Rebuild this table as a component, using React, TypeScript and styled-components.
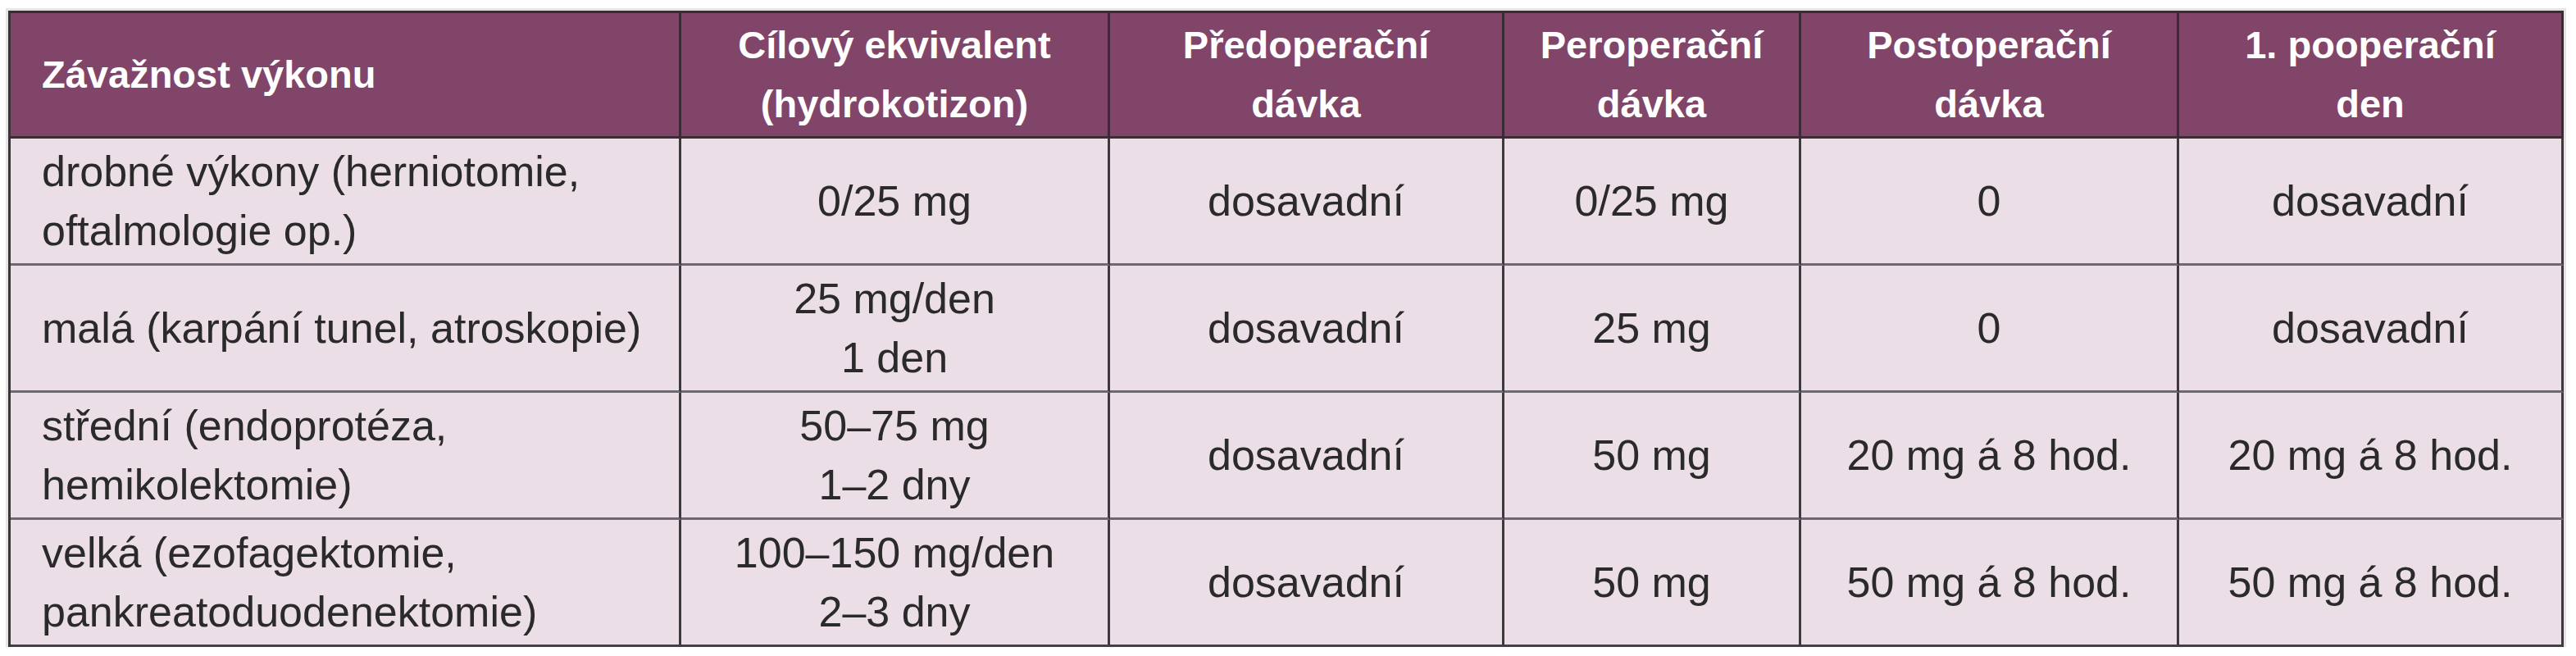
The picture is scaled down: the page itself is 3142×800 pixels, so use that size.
import styled, { createGlobalStyle } from 'styled-components';

const GlobalStyle = createGlobalStyle`
	html, body {
		margin: 0;
		padding: 0;
		background: #ffffff;
	}
	body {
		font-family: "Liberation Sans", Arial, sans-serif;
	}
`;

const Page = styled.div`
	padding: 13px 0 0 10px;
`;

const Table = styled.div`
	display: grid;
	grid-template-columns: 818px 523px 481px 362px 461px 469px;
	grid-template-rows: 153px repeat(4, 155px);
	width: max-content;
	border-top: 3px solid #3a2c35;
	border-left: 3px solid #3a3438;
	box-shadow: 0 0 0 3px #e6e4e5;
	background: #ecdee6;
`;

const HeadCell = styled.div<{ $left?: boolean; $last?: boolean }>`
	box-sizing: border-box;
	display: flex;
	align-items: center;
	justify-content: ${(p) => (p.$left ? 'flex-start' : 'center')};
	text-align: ${(p) => (p.$left ? 'left' : 'center')};
	padding: 0 ${(p) => (p.$left ? '0 0 38px' : '10px')};
	background: #82456a;
	color: #ffffff;
	font-weight: 700;
	font-size: 47px;
	line-height: 72px;
	border-right: 3px solid #3a2a35;
	border-bottom: 3px solid #3b2c36;
`;

const Cell = styled.div<{ $left?: boolean; $lastRow?: boolean }>`
	box-sizing: border-box;
	display: flex;
	align-items: center;
	justify-content: ${(p) => (p.$left ? 'flex-start' : 'center')};
	text-align: ${(p) => (p.$left ? 'left' : 'center')};
	padding: ${(p) => (p.$left ? '0 0 0 38px' : '0 10px')};
	color: #2a2a2a;
	font-size: 52px;
	line-height: 72px;
	border-right: 3px solid #3e393c;
	border-bottom: 3px solid ${(p) => (p.$lastRow ? '#454045' : '#6e6870')};
`;

const head = [
	['Závažnost výkonu'],
	['Cílový ekvivalent', '(hydrokotizon)'],
	['Předoperační', 'dávka'],
	['Peroperační', 'dávka'],
	['Postoperační', 'dávka'],
	['1. pooperační', 'den'],
];

const rows: string[][][] = [
	[
		['drobné výkony (herniotomie,', 'oftalmologie op.)'],
		['0/25 mg'],
		['dosavadní'],
		['0/25 mg'],
		['0'],
		['dosavadní'],
	],
	[
		['malá (karpání tunel, atroskopie)'],
		['25 mg/den', '1 den'],
		['dosavadní'],
		['25 mg'],
		['0'],
		['dosavadní'],
	],
	[
		['střední (endoprotéza,', 'hemikolektomie)'],
		['50–75 mg', '1–2 dny'],
		['dosavadní'],
		['50 mg'],
		['20 mg á 8 hod.'],
		['20 mg á 8 hod.'],
	],
	[
		['velká (ezofagektomie,', 'pankreatoduodenektomie)'],
		['100–150 mg/den', '2–3 dny'],
		['dosavadní'],
		['50 mg'],
		['50 mg á 8 hod.'],
		['50 mg á 8 hod.'],
	],
];

function Lines({ lines }: { lines: string[] }) {
	return (
		<span>
			{lines.map((l, i) => (
				<span key={i}>
					{i > 0 && <br />}
					{l}
				</span>
			))}
		</span>
	);
}

function App() {
	return (
		<Page>
			<GlobalStyle />
			<Table>
				{head.map((h, i) => (
					<HeadCell key={'h' + i} $left={i === 0}>
						<Lines lines={h} />
					</HeadCell>
				))}
				{rows.map((row, r) =>
					row.map((cell, c) => (
						<Cell key={r + '-' + c} $left={c === 0} $lastRow={r === rows.length - 1}>
							<Lines lines={cell} />
						</Cell>
					))
				)}
			</Table>
		</Page>
	);
}

export default App;
